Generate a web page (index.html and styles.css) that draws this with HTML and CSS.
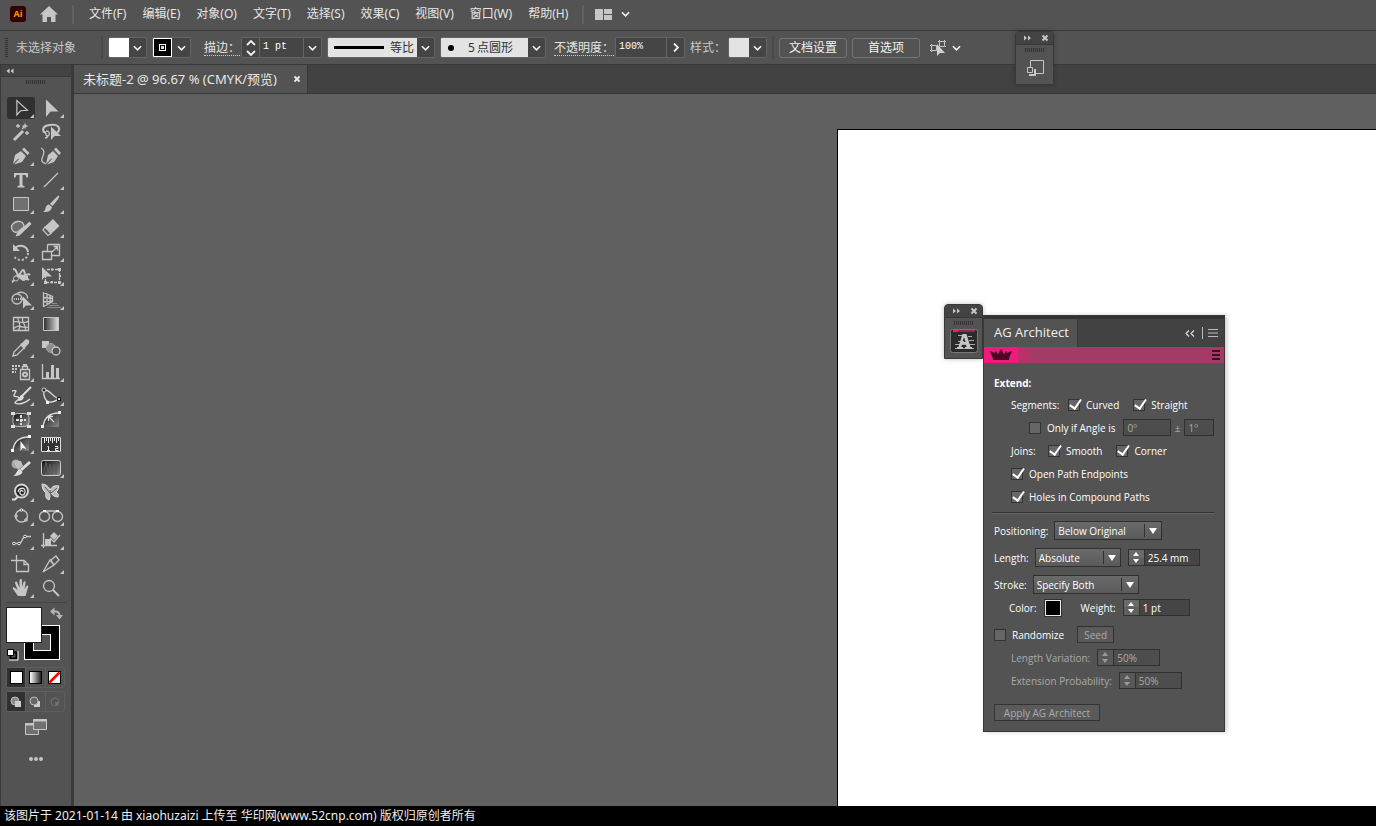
FILE: index.html
```html
<!DOCTYPE html>
<html lang="zh-CN">
<head>
<meta charset="utf-8">
<title>未标题-2 @ 96.67 % (CMYK/预览)</title>
<link rel="stylesheet" href="styles.css">
</head>
<body>
<svg class="defs" aria-hidden="true">
  <defs>
    <linearGradient id="lg" x1="0" x2="1"><stop offset="0" stop-color="#2c2c2c"/><stop offset="1" stop-color="#e0e0e0"/></linearGradient>
    <linearGradient id="wb" x1="0" x2="1"><stop offset="0" stop-color="#fff"/><stop offset="1" stop-color="#222"/></linearGradient>
    <linearGradient id="dk" x1="0" x2="1" y2="1"><stop offset="0" stop-color="#111"/><stop offset="1" stop-color="#8a8a8a"/></linearGradient>
    <symbol id="chev" viewBox="0 0 10 6"><path d="M1 1l4 4 4-4" fill="none" stroke="#f0f0f0" stroke-width="1.8"/></symbol>
    <symbol id="close" viewBox="0 0 8 8"><path d="M1.500 1.500l5 5M6.500 1.500l-5 5" stroke="currentColor" stroke-width="2"/></symbol>
    <symbol id="ff" viewBox="0 0 8 6"><path d="M0 .5L3 3 0 5.500zM4 .5L7 3 4 5.500z" fill="currentColor"/></symbol>
    <symbol id="rw" viewBox="0 0 8 6"><path d="M3.500 .5L.5 3l3 2.500zM7.500 .5L4.500 3l3 2.500z" fill="currentColor"/></symbol>
  </defs>
</svg>

<header class="menubar">
  <svg class="logo" viewBox="0 0 16 16"><rect width="16" height="16" rx="3" fill="#330000"/><text x="8" y="11" text-anchor="middle" class="logo-text">Ai</text></svg>
  <button class="plain" aria-label="主页"><svg width="18" height="16" viewBox="0 0 18 16"><path d="M9 0L0 8.500h2.500V16H7v-5h4v5h4.500V8.500H18z" fill="#c6c6c6"/></svg></button>
  <span class="vline"></span>
  <nav class="menus">
    <button>文件(F)</button><button>编辑(E)</button><button>对象(O)</button><button>文字(T)</button><button>选择(S)</button><button>效果(C)</button><button>视图(V)</button><button>窗口(W)</button><button>帮助(H)</button>
  </nav>
  <span class="vline"></span>
  <button class="plain layout" aria-label="排列文档"><svg width="17" height="11" viewBox="0 0 17 11"><path d="M0 0h8v11H0zM9 0h8v5H9zM9 6h8v5H9z" fill="#c6c6c6"/></svg><svg width="9" height="6"><use href="#chev"/></svg></button>
</header>

<section class="control">
  <span class="grip-v"></span>
  <span class="status">未选择对象</span>
  <span class="vline"></span>
  <button class="combo" aria-label="填色"><span class="sw white"></span><span class="dd"><svg width="9" height="6"><use href="#chev"/></svg></span></button>
  <button class="combo" aria-label="描边颜色"><span class="sw"><svg width="19" height="19" viewBox="0 0 19 19"><path d="M0 0h19v19H0z" fill="#fff"/><path d="M1 1h17v17H1z"/><path d="M6 6h7v7H6z" fill="#fff"/><path d="M7 7h5v5H7z"/><path d="M8 8h3v3H8z" fill="#ddd"/></svg></span><span class="dd"><svg width="9" height="6"><use href="#chev"/></svg></span></button>
  <label class="dotted first" for="weight">描边：</label>
  <span class="combo">
    <button class="spin" aria-label="调整描边粗细"><svg width="10" height="16" viewBox="0 0 10 16"><path d="M1 5l4-4 4 4M1 11l4 4 4-4" fill="none" stroke="#f0f0f0" stroke-width="1.800"/></svg></button>
    <input id="weight" class="num" value="1 pt"><button class="dd" aria-label="描边粗细列表"><svg width="9" height="6"><use href="#chev"/></svg></button>
  </span>
  <button class="combo profile"><span class="light"><i class="bar"></i>等比</span><span class="dd"><svg width="9" height="6"><use href="#chev"/></svg></span></button>
  <button class="combo brush"><span class="light"><i class="dot"></i><b>5</b>点圆形</span><span class="dd"><svg width="9" height="6"><use href="#chev"/></svg></span></button>
  <label class="dotted" for="opacity">不透明度：</label>
  <span class="combo"><input id="opacity" class="num wide" value="100%"><button class="dd" aria-label="不透明度列表"><svg width="6" height="9" viewBox="0 0 6 9"><path d="M1 .5l4 4-4 4" fill="none" stroke="#f0f0f0" stroke-width="1.800"/></svg></button></span>
  <span class="style-label">样式：</span>
  <button class="combo" aria-label="图形样式"><span class="sw pale"></span><span class="dd"><svg width="9" height="6"><use href="#chev"/></svg></span></button>
  <span class="vline"></span>
  <button class="btn">文档设置</button>
  <button class="btn">首选项</button>
  <button class="plain similar" aria-label="选择类似的对象"><svg width="16" height="16" viewBox="0 0 16 16"><g fill="none" stroke="#c6c6c6"><path d="M1.500 5.500h5v5h-5zM9.500 1.500h5v5h-5zM0 5.500h1M1.500 4v1M0 10.500h1M1.500 11v1M14.500 0v1M15 1.500h1M9.500 0v1M8 1.500h1M15 6.500h1"/></g><path d="M7 4v12l3-3h5z" fill="#d0d0d0"/></svg><svg width="9" height="6"><use href="#chev"/></svg></button>
</section>

<main class="work">
  <aside class="tools">
    <div class="tools-head"><svg width="8" height="6"><use href="#rw"/></svg></div>
    <div class="grip-h"></div>
    <div class="grid">
      <button class="tool more on" aria-label="选择工具"><svg viewBox="0 0 28 24"><path d="M9.500 4v15.500l4-4.500 7.500-.5z" class="l"/></svg></button>
      <button class="tool more" aria-label="直接选择工具"><svg viewBox="0 0 28 24"><path d="M9 3.500v17.500l4.500-5.500H21.500z" class="f"/></svg></button>
      <button class="tool" aria-label="魔棒工具"><svg viewBox="0 0 28 24"><path d="M7 20l9-9" class="l w3"/><path d="M11 4v4M9 6h4M18 3.500v5M15.500 6h5M20 11v4M18 13h4M15 9l2-2" class="l"/></svg></button>
      <button class="tool" aria-label="套索工具"><svg viewBox="0 0 28 24"><path d="M9 13c-4-1-4-6 1-7.500s11-1 12 2.500c.5 2-.5 4-2 4.500" class="l w2"/><path d="M9 11c3 0 4 2 3 4s-4 1-3-2M11 15c0 2-1 3-3 3" class="l"/><path d="M14 6.500v13.500l3.500-4h6.500z" class="f"/></svg></button>
      <button class="tool more" aria-label="钢笔工具"><svg viewBox="0 0 28 24"><path d="M6 20l2-9 6-4 5 5-4 6-8 2.500 5-5.500-.6-.6z" class="f"/><path d="M15 5.500l2-2 5.500 5.500-2 2z" class="f"/></svg></button>
      <button class="tool" aria-label="曲率工具"><svg viewBox="0 0 28 24"><path d="M9 20l2-9 5-4 5 5-4 6-7 2.500 5-5.500-.6-.6zM17 5.500l2-2 5 5.500-2 2z" class="f"/><path d="M4 4c4 2 3 5 2 8-2 4-2 6 3 8" class="l"/></svg></button>
      <button class="tool more" aria-label="文字工具"><svg viewBox="0 0 28 24"><path d="M7 5h14v4.500h-1.500l-1-2.500H15.500v10.500l2 .5v1.500h-7V18l2-.5V7H9.500l-1 2.500H7z" class="f"/></svg></button>
      <button class="tool more" aria-label="直线段工具"><svg viewBox="0 0 28 24"><path d="M7 19L21 5" class="l"/></svg></button>
      <button class="tool more" aria-label="矩形工具"><svg viewBox="0 0 28 24"><path d="M6.500 5.500h15v13h-15z" fill="#707070" stroke="#c6c6c6"/></svg></button>
      <button class="tool more" aria-label="画笔工具"><svg viewBox="0 0 28 24"><path d="M21.500 3.500c1.500 1 1 2-6 10.500l-2.500-2c7-7.500 7.500-8 8.500-8.500zM12 12.500l3 2.500c-1 4.500-4.500 5.500-9 5 2-1 2-2 2.500-4s2-3.500 3.500-3.500z" class="f"/></svg></button>
      <button class="tool more" aria-label="Shaper 工具"><svg viewBox="0 0 28 24"><path d="M17 11c.5-4-3-6-6.500-5.500S4 9 4.500 12s3 5 6 4z" fill="#6c6c6c" stroke="#c6c6c6" stroke-width="1.300"/><path d="M22.500 5.500l2 2.500-12 11.500-4 1 1.500-3.500z" class="f"/></svg></button>
      <button class="tool more" aria-label="橡皮擦工具"><svg viewBox="0 0 28 24"><path d="M16 3l6.500 7-8 7.500L8 10.500z" class="f"/><path d="M8 11l6 6.500-3 2-5-5.500z" class="l"/></svg></button>
      <button class="tool more" aria-label="旋转工具"><svg viewBox="0 0 28 24"><path d="M8 8c4-4 12-2.500 13 4" class="l w2"/><path d="M21 13c0 7-10 10-14 3" class="l w2" stroke-dasharray="2 2"/><path d="M6 4v7h7z" class="f"/></svg></button>
      <button class="tool more" aria-label="比例缩放工具"><svg viewBox="0 0 28 24"><path d="M10.500 4.500h12v11h-8M5.500 11.500H14.500V19.500H5.500zM10.500 4.500v7M15 12l5-5M16.500 6.500H20.500V10.500" class="l"/></svg></button>
      <button class="tool more" aria-label="宽度工具"><svg viewBox="0 0 28 24"><path d="M6 5c4 0 3 4 5 6 3 0 3-5 5-5s1 5 3 5 2-2 4 0M5 18c3-1 2-6 5-6s5 5 7 4 2-3 5 0" class="l w2"/><path d="M11 11c3-1 7 0 10 1v4c-4 1-6-2-10-3z" class="f"/><circle cx="9" cy="14.500" r="2.500" fill="#535353" stroke="#c6c6c6"/></svg></button>
      <button class="tool more" aria-label="自由变换工具"><svg viewBox="0 0 28 24"><path d="M10 5.500h12.500v13H8.500V11" class="l" stroke-dasharray="3 1"/><path d="M21 4h3v3h-3zM21 17h3v3h-3zM7 17h3v3H7zM14 4.500h2v2h-2zM14 17h2v2h-2zM22 11h2v2h-2zM5 3v13l3-3.500h7z" class="f"/></svg></button>
      <button class="tool more" aria-label="形状生成器工具"><svg viewBox="0 0 28 24"><circle cx="10" cy="11" r="5" class="l"/><path d="M10 5.500c5-3 11 0 10.500 5" class="l"/><path d="M7 11h9" class="l w2" stroke-dasharray="1 1"/><path d="M16 8.500v12l3-3h6z" class="f"/></svg></button>
      <button class="tool more" aria-label="透视网格工具"><svg viewBox="0 0 28 24"><path d="M6.500 4v15M6.500 4.500l9 4v5l-9 5M10 6v11M13 7.500v8M6.500 9.500l9 1M6.500 14l9-1" class="l"/><path d="M15 15.500h5M12 17.500h10M10 19.500h14" stroke="#8c8c8c"/></svg></button>
      <button class="tool" aria-label="网格工具"><svg viewBox="0 0 28 24"><path d="M6.500 5.500h15v13h-15zM6.500 10c5-2 10 3 15-1M6.500 17c4-6 10 0 15-2M11 5.500c-1 4 5 8 0 13M16 5.500c-3 4 5 9 2 13" class="l"/></svg></button>
      <button class="tool" aria-label="渐变工具"><svg viewBox="0 0 28 24"><path d="M6.500 5.500h15v13h-15z" fill="url(#lg)" stroke="#c6c6c6"/></svg></button>
      <button class="tool more" aria-label="吸管工具"><svg viewBox="0 0 28 24"><path d="M6 20l1-4 7-7 3 3-7 7z" class="l"/><path d="M13 8l2-1 3-3c2-2 6 1 3.500 4l-3 3-.5 2.500z" class="f"/></svg></button>
      <button class="tool" aria-label="混合工具"><svg viewBox="0 0 28 24"><path d="M5 5h7v7H5z" class="f"/><circle cx="14" cy="12" r="4.500" fill="#8d8d8d" stroke="#a5a5a5"/><circle cx="19" cy="15" r="4" fill="#535353" stroke="#c6c6c6" stroke-width="1.300"/></svg></button>
      <button class="tool more" aria-label="符号喷枪工具"><svg viewBox="0 0 28 24"><path d="M13.500 9.500h9V19.500h-9zM15.500 9V6.500h5V9" class="l"/><path d="M16 4h4v2h-4z" class="f"/><circle cx="18" cy="14.500" r="2" class="l w2"/><path d="M5 6h8M5 9h6M5 12h4" class="l w2" stroke-dasharray="2 1"/></svg></button>
      <button class="tool more" aria-label="柱形图工具"><svg viewBox="0 0 28 24"><path d="M5.500 4v14.500H23" class="l"/><path d="M9 12h3v7H9zM14 5h3v14h-3zM19 8h3v11h-3z" class="f"/></svg></button>
      <button class="tool more" aria-label="动态草绘工具"><svg viewBox="0 0 28 24"><path d="M5 7c2 0 4-1 4 0s-3 4-2 5 5 0 5 2-5 4-4 5c4 2 11 0 15-4" class="l hi"/><path d="M24 3L14 13" class="l w2 hi"/><path d="M14 11l3 2c-1 3-3 4-6 4 1-2 1-4 3-6z" fill="#ddd"/></svg></button>
      <button class="tool more" aria-label="贝塞尔工具"><svg viewBox="0 0 28 24"><path d="M7 6c-1 5 1 11 5 12s8-2 10-3M7 6c8 0 6 6 15 9" class="l hi"/><circle cx="7" cy="6" r="2" fill="#222" stroke="#ddd"/><path d="M20.500 13.500h3v3h-3z" stroke="#111" fill="#ddd"/><path d="M9 17h3v3H9z" fill="#eee"/></svg></button>
      <button class="tool" aria-label="路径编辑工具"><svg viewBox="0 0 28 24"><rect x="6" y="5.500" width="16" height="13" rx="4" fill="url(#dk)" stroke="#bbb"/><path d="M4 4h4v3H4zM20 4h4v3h-4zM4 17h4v3H4zM20 17h4v3h-4z" fill="#ddd"/><path d="M14 7v10M9 12h10" class="l w2 hi" stroke-dasharray="3 1"/></svg></button>
      <button class="tool" aria-label="圆角工具"><svg viewBox="0 0 28 24"><path d="M6 19C7 10 12 5 22 5v14z" fill="url(#dk)"/><path d="M6 19C7 10 12 5 22 5M11 8l6 6M12 8.500h4M11.500 9v4" class="l hi"/><path d="M4 17h3v3H4zM21 3h3v3h-3z" fill="#eee"/></svg></button>
      <button class="tool more" aria-label="智能移除工具"><svg viewBox="0 0 28 24"><path d="M6 18C7 10 12 5 22 5v14z" fill="url(#dk)"/><path d="M6 18C7 10 12 5 22 5" class="l hi"/><path d="M4 17h3v3H4zM21 3h3v3h-3zM13.500 9v10l2-3 4 1z" fill="#fff"/></svg></button>
      <button class="tool" aria-label="测量工具"><svg viewBox="0 0 28 24"><path d="M4.500 5.500h19v14h-19z" fill="#333" stroke="#ddd"/><path d="M7.500 6v5M9.500 6v3M11.500 6v5M13.500 6v3M15.500 6v5M17.500 6v3M19.500 6v5M21.500 6v3" stroke="#eee"/><path d="M10.500 14.500h1v4M10 18.500h3M18 14.500h3v2h-2.500v2h3" fill="none" stroke="#eee"/></svg></button>
      <button class="tool" aria-label="样式画笔工具"><svg viewBox="0 0 28 24"><circle cx="9" cy="8" r="4.500" fill="#a8a8a8"/><path d="M6 5h8l2 5-5 4z" fill="#bdbdbd"/><path d="M23 6L14 14" class="l w3 hi"/><path d="M13 13l2.500 3c-1 3-5 4-9 4 3-2 3-6 6.500-7z" fill="#ddd"/></svg></button>
      <button class="tool more" aria-label="纹理工具"><svg viewBox="0 0 28 24"><rect x="4.500" y="4.500" width="19" height="15" rx="2" fill="url(#dk)" stroke="#ccc"/><path d="M7 15l2-9 2 11 2-9 2 10 2-10 2 10 2-10" stroke="#5d5d5d" fill="none"/></svg></button>
      <button class="tool more" aria-label="魔镜工具"><svg viewBox="0 0 28 24"><circle cx="14.500" cy="11" r="6.500" fill="#222" stroke="#d5d5d5" stroke-width="2"/><path d="M11 12c1-5 8-5 7 0s-6 3-5 0 3-1 3 0" class="l hi"/><path d="M5 19.500h3l3-3" class="l w2 hi"/></svg></button>
      <button class="tool" aria-label="蝴蝶工具"><svg viewBox="0 0 28 24"><path d="M5 4c4 0 7 3 8 6 2-4 6-5 9-4-1 3-1 5-3 6 2 1 3 3 2 5-3 0-5-1-7-4l-2 7c-3-1-4-4-3-7-3-2-4-6-4-9z" fill="#bdbdbd" stroke="#ddd"/><path d="M8 7l5 6M13 10l1 6M20 8l-6 5" stroke="#5a5a5a" fill="none"/></svg></button>
      <button class="tool more" aria-label="动态椭圆工具"><svg viewBox="0 0 28 24"><circle cx="14.500" cy="12" r="6" class="l"/><g fill="#535353" stroke="#eee"><circle cx="14.500" cy="6" r="1.200"/><circle cx="9" cy="12" r="1.200"/><circle cx="19" cy="16" r="1.200"/></g></svg></button>
      <button class="tool more" aria-label="相切圆工具"><svg viewBox="0 0 28 24"><circle cx="7.500" cy="12.500" r="5" class="l"/><circle cx="20.500" cy="12.500" r="5" class="l"/><path d="M8 7h12" class="l hi"/><path d="M6 6h3v2H6zM19 6h3v2h-3z" fill="#eee"/></svg></button>
      <button class="tool more" aria-label="延伸路径工具"><svg viewBox="0 0 28 24"><path d="M5 15.500h7c4 0 2-7 7-7h5" class="l"/><g fill="#222" stroke="#eee"><circle cx="7" cy="15.500" r="1.300"/><circle cx="12" cy="15.500" r="1.300"/><circle cx="18" cy="8.500" r="1.300"/></g></svg></button>
      <button class="tool more" aria-label="对齐路径工具"><svg viewBox="0 0 28 24"><path d="M6.500 5v15M4 17.500h16M23 7l-6 7-4-4" class="l"/><path d="M8 11h6v6H8zM17 4l4 4-4 4-4-4z" class="f"/></svg></button>
      <button class="tool" aria-label="画板工具"><svg viewBox="0 0 28 24"><path d="M9.500 3v6M4 8.500h5M9.500 8.500h7.500l4.500 4v7H9.500zM17 8.500v4h4" class="l"/></svg></button>
      <button class="tool more" aria-label="切片工具"><svg viewBox="0 0 28 24"><path d="M6 20l7-12 4 5zM14 8l5-4 3 4-5 5z" class="l"/></svg></button>
      <button class="tool more" aria-label="抓手工具"><svg viewBox="0 0 28 24"><path d="M11 20l-5-7c-1-2 1-2.500 2-1l2.500 2-2.500-7c0-2 2-2 2.500 0l2 5V4.500c0-2 2.500-2 2.500 0V11l1.500-5c.5-1.500 2.500-1 2 1l-1 6 2-3c1-1 2.500 0 1.500 1.500L18.500 20z" class="f"/></svg></button>
      <button class="tool" aria-label="缩放工具"><svg viewBox="0 0 28 24"><circle cx="12" cy="10" r="5.500" class="l"/><path d="M16 14l6 6" class="l w2"/></svg></button>
    </div>
    <hr>
    <svg class="swatches" width="60" height="54" viewBox="0 0 60 54">
      <path d="M18 18h36v35H18z" fill="#fff"/><path d="M19 19h34v33H19z"/><path d="M27 27h18v17H27z" fill="#fff"/><path d="M28 28h16v15H28z" fill="#535353"/>
      <path d="M0 0h36v36H0z" fill="#222"/><path d="M1 1h34v34H1z" fill="#fff"/>
      <path d="M48 4.500c4-.5 5.500 1.500 5.500 4" fill="none" stroke="#b5b5b5" stroke-width="2"/><path d="M44 4.500l4.500-4v8zM50 8h7l-3.500 4.500z" fill="#b5b5b5"/>
      <path d="M4.500 45.500h6v6h-6z" stroke="#000" stroke-width="2" fill="none"/><path d="M1.500 42.500h6v6h-6z" fill="#fff" stroke="#000"/><path d="M3 53h9v-9" fill="none" stroke="#fff"/>
    </svg>
    <div class="modes">
      <button class="on" aria-label="颜色"><svg width="13" height="13"><path d="M0 0h13v13H0z"/><path d="M1 1h11v11H1z" fill="#fff"/></svg></button>
      <button aria-label="渐变"><svg width="13" height="13"><path d="M0 0h13v13H0z"/><path d="M1 1h11v11H1z" fill="url(#wb)"/></svg></button>
      <button aria-label="无"><svg width="13" height="13"><path d="M0 0h13v13H0z"/><path d="M1 1h11v11H1z" fill="#fff"/><path d="M1.500 11.500l10-10" stroke="#f00" stroke-width="2.500"/></svg></button>
    </div>
    <div class="modes">
      <button class="on" aria-label="正常绘图"><svg width="12" height="12"><circle cx="5" cy="5" r="4" fill="#888" stroke="#bbb"/><path d="M5 5h6v6H5z" fill="#ccc"/></svg></button>
      <button aria-label="背面绘图"><svg width="12" height="12"><path d="M5 5h6v6H5z" fill="#ccc"/><circle cx="5" cy="5" r="4" fill="#666" stroke="#bbb"/></svg></button>
      <button aria-label="内部绘图"><svg width="12" height="12"><circle cx="6" cy="6" r="4" fill="none" stroke="#707070"/><path d="M6 6h3v3H6z" fill="#707070"/></svg></button>
    </div>
    <button class="plain screen" aria-label="更改屏幕模式"><svg width="22" height="16" viewBox="0 0 22 16"><path d="M.5 4.500h13v11H.5z" fill="#707070" stroke="#c6c6c6"/><path d="M8.500.5h13v10h-13z" fill="#707070" stroke="#c6c6c6"/><path d="M0 5.500h8M8 1.500h14" stroke="#c6c6c6" stroke-width="2"/></svg></button>
    <button class="plain dots" aria-label="编辑工具栏"><svg width="14" height="4"><g fill="#c6c6c6"><circle cx="2" cy="2" r="2"/><circle cx="7" cy="2" r="2"/><circle cx="12" cy="2" r="2"/></g></svg></button>
  </aside>

  <section class="document">
    <div class="tabs"><div class="tab"><span>未标题-2 @ 96.67 % (CMYK/预览)</span><button class="plain" aria-label="关闭"><svg width="8" height="8"><use href="#close"/></svg></button></div></div>
    <div class="canvas">
      <div class="artboard"></div>
      <div class="dock ag-dock">
        <div class="dock-head"><svg width="8" height="6"><use href="#ff"/></svg><svg width="8" height="8"><use href="#close"/></svg></div>
        <div class="grip-h"></div>
        <button class="dock-icon" aria-label="AG Architect 面板"><svg width="28" height="24" viewBox="0 0 28 24"><rect x=".5" y=".5" width="27" height="23" rx="2" fill="#2b2b2b" stroke="#777"/><path d="M3 1h5v2H3z" fill="#f01a7c"/><path d="M8 1h17v2H8z" fill="#8e2a5a"/><path d="M8 6.500h5M8 12.500h6M5 15.500h20M5 19.500h19M19 11.500h5M18 7.500h4" stroke="#aaa"/><path d="M12.500 5h4l4 13h1.500v2h-7v-2h1.500l-.5-3h-4l-.7 3h1.700v2H7v-2h1.500zM14 8l-1.500 5h3z" fill="#c6c6c6" fill-rule="evenodd"/></svg></button>
      </div>
      <section class="panel">
        <div class="panel-tabs"><h2>AG Architect</h2><svg width="10" height="7" viewBox="0 0 10 7"><path d="M4 .5l-3 3 3 3M9 .5l-3 3 3 3" fill="none" stroke="#ddd" stroke-width="1.200"/></svg><i></i><svg width="10" height="8"><path d="M0 .5h10M0 4h10M0 7.500h10" stroke="#bbb"/></svg></div>
        <div class="banner">
          <svg width="48" height="16" viewBox="0 0 48 16"><path d="M0 0h34v16H0z" fill="#f01a7c"/><path d="M34 1h3v2h-3zM38 0h2v2h-2zM35 4h2v3h-2zM38 4h3v2h-3zM42 2h2v2h-2zM34 8h3v2h-3zM39 8h2v2h-2zM42 7h3v2h-3zM36 11h3v2h-3zM41 11h2v2h-2zM34 13h2v3h-2zM39 14h2v2h-2zM43 13h2v2h-2z" fill="#d8226f"/><path d="M6 4l5 2 1-2 2 3.500 1-2L17 2l2 3.500 1 2L22 4l1 2 5-2c-1 4-3 5-3 9H9c0-4-2-5-3-9z" fill="#4a0a26"/></svg>
          <svg width="8" height="10"><path d="M0 1h8M0 5h8M0 9h8" stroke="#3b1023" stroke-width="2"/></svg>
        </div>
        <form class="form">
          <strong>Extend:</strong>
          <div class="row in"><span class="seg">Segments:</span><label class="check"><input type="checkbox" checked>Curved</label><label class="check"><input type="checkbox" checked>Straight</label></div>
          <div class="row deep"><label class="check"><input type="checkbox">Only if Angle is</label><input class="field angle" aria-label="Angle" value="0º" disabled><span class="dim">±</span><input class="field tol" aria-label="Tolerance" value="1º" disabled></div>
          <div class="row in"><span class="joins">Joins:</span><label class="check"><input type="checkbox" checked>Smooth</label><label class="check"><input type="checkbox" checked>Corner</label></div>
          <div class="row in"><label class="check"><input type="checkbox" checked>Open Path Endpoints</label></div>
          <div class="row in"><label class="check"><input type="checkbox" checked>Holes in Compound Paths</label></div>
          <hr>
          <div class="row tall"><label for="pos">Positioning:</label><span class="select w108"><select id="pos"><option>Below Original</option></select></span></div>
          <div class="row tall"><label for="len">Length:</label><span class="select w86"><select id="len"><option>Absolute</option></select></span><span class="step"><button type="button" aria-label="Adjust length"></button><input class="field" aria-label="Length value" value="25.4 mm"></span></div>
          <div class="row tall"><label for="str">Stroke:</label><span class="select w106"><select id="str"><option>Specify Both</option></select></span></div>
          <div class="row short"><span>Color:</span><button type="button" class="color" aria-label="Color"></button><label for="wt" class="weight">Weight:</label><span class="step mid"><button type="button" aria-label="Adjust weight"></button><input id="wt" class="field" value="1 pt"></span></div>
          <div class="row random"><label class="check"><input type="checkbox">Randomize</label><button type="button" class="push" disabled>Seed</button></div>
          <div class="row in dim"><label for="lv">Length Variation:</label><span class="step off small"><button type="button" disabled aria-label="Adjust variation"></button><input id="lv" class="field" value="50%" disabled></span></div>
          <div class="row in dim"><label for="ep">Extension Probability:</label><span class="step off small"><button type="button" disabled aria-label="Adjust probability"></button><input id="ep" class="field" value="50%" disabled></span></div>
          <button type="button" class="push apply" disabled>Apply AG Architect</button>
        </form>
      </section>
    </div>
  </section>
</main>

<div class="dock top-dock">
  <div class="dock-head"><svg width="8" height="6"><use href="#ff"/></svg><svg width="8" height="8"><use href="#close"/></svg></div>
  <div class="grip-h"></div>
  <button class="dock-icon" aria-label="资源导出"><svg width="18" height="17" viewBox="0 0 18 17"><path d="M3.500 7V.5h13V13.500H9" fill="none" stroke="#c6c6c6"/><path d="M.5 7.500h5v5h-5z" fill="#535353" stroke="#c6c6c6"/><path d="M7 10h1v5H3v-1" fill="none" stroke="#c6c6c6" stroke-width="2"/></svg></button>
</div>

<footer class="caption">该图片于 2021-01-14 由 xiaohuzaizi 上传至 华印网(www.52cnp.com) 版权归原创者所有</footer>
</body>
</html>
```

FILE: styles.css
```css
* { box-sizing: border-box; }
html, body { height: 100%; }
body {
  margin: 0;
  display: flex;
  flex-direction: column;
  overflow: hidden;
  background: #535353;
  color: #e6e6e6;
  font: 12px/16px "Noto Sans", "Noto Sans CJK SC", sans-serif;
}
button, input, select { font: inherit; color: inherit; margin: 0; padding: 0; border: 0; background: none; border-radius: 0; }
svg { display: block; flex: none; }
.defs { position: absolute; width: 0; height: 0; }
.plain { display: flex; align-items: center; justify-content: center; }
.vline { width: 2px; align-self: stretch; margin: 5px 0; background: #494949; flex: none; }

.menubar { flex: none; height: 31px; display: flex; align-items: center; padding: 0 10px 2px; border-bottom: 1px solid #383838; }
.logo { width: 16px; height: 16px; }
.logo-text { font: bold 9px "Open Sans", sans-serif; fill: #ff9a00; }
.menubar > .plain { margin-left: 14px; }
.menubar .vline { margin: 5px 0 4px 14px; background: #616161; }
.menus { display: flex; gap: 16px; margin-left: 15px; white-space: nowrap; }
.menubar .layout { gap: 9px; margin-left: 11px; }

.control { flex: none; height: 34px; display: flex; align-items: center; gap: 5px; padding: 0 5px; border-bottom: 1px solid #383838; white-space: nowrap; }
.grip-v { width: 3px; height: 20px; background: repeating-linear-gradient(#333 0 1px, transparent 1px 2px); }
.status { width: 80px; margin-left: 3px; color: #c8c8c8; }
.combo { display: flex; align-items: stretch; height: 21px; border: 1px solid #646464; border-radius: 2px; background: #454545; overflow: hidden; }
.sw { width: 20px; }
.white { background: #fff; }
.pale { background: #e3e3e3; }
.dd { width: 17px; display: flex; align-items: center; justify-content: center; }
.num + .dd { width: 18px; border-left: 1px solid #646464; }
.dotted { border-bottom: 1px dotted #ccc; line-height: 15px; margin-right: -4px; }
.first { margin-left: 8px; }
.spin { width: 18px; display: flex; align-items: center; justify-content: center; border-right: 1px solid #646464; }
.num { width: 43px; padding: 0 3px 2px; color: #fff; font: 10px/16px "Liberation Mono", monospace; }
.wide { width: 50px; }
.light { display: flex; align-items: center; flex: 1; background: #e3e3e3; color: #333; }
.profile { width: 108px; }
.brush { width: 106px; margin-right: 3px; }
.bar { width: 50px; height: 3px; margin: 0 6px; background: #000; }
.dot { width: 6px; height: 6px; margin: 0 12px 0 7px; border-radius: 50%; background: #000; }
.brush b { font-weight: 400; width: 11px; }
.style-label { color: #c8c8c8; margin-right: -3px; }
.btn { width: 68px; height: 20px; border: 1px solid #757575; border-radius: 3px; color: #f2f2f2; line-height: 18px; }
.similar { gap: 6px; margin-left: 5px; }

.work { flex: 1; min-height: 0; display: flex; }
.tools { width: 74px; flex: none; display: flex; flex-direction: column; border-left: 1px solid #3a3a3a; border-right: 3px solid #3a3a3a; padding: 0 5px; }
.tools-head { height: 12px; margin: 0 -5px; padding: 3px 5px; background: #434343; border-bottom: 1px solid #383838; color: #ccc; }
.grip-h { width: 20px; height: 4px; margin: 3px auto 0; background: repeating-linear-gradient(90deg, #333 0 1px, transparent 1px 2px); }
.grid { display: grid; grid-template-columns: repeat(2, 30px); grid-auto-rows: 24px; margin-top: 12px; }
.tool { position: relative; display: flex; justify-content: center; }
.tool svg { width: 28px; height: 24px; }
.tool.on svg { background: #303030; border-radius: 3px; height: 22px; margin-top: 1px; }
.more::after { content: ""; position: absolute; right: 2px; bottom: 2px; border: 2px solid; border-color: transparent #c6c6c6 #c6c6c6 transparent; }
.f { fill: #c6c6c6; }
.l { fill: none; stroke: #c6c6c6; stroke-width: 1.3; }
.w2 { stroke-width: 2; }
.w3 { stroke-width: 3; }
.hi { stroke: #ddd; }
.tools hr { width: 60px; margin: 2px 0 4px; border: 0; border-top: 1px solid #444; }
.modes { display: flex; width: 59px; height: 21px; margin-top: 6px; border: 1px solid #5f5f5f; border-radius: 3px; }
.modes + .modes { margin-top: 3px; }
.modes button { flex: 1; display: flex; align-items: center; justify-content: center; border-right: 1px solid #5f5f5f; }
.modes button:last-child { border: 0; }
.modes .on { background: #303030; }
.screen { margin: 7px auto 0; }
.dots { margin-top: 22px; }

.document { flex: 1; min-width: 0; display: flex; flex-direction: column; }
.tabs { flex: none; height: 29px; display: flex; background: #424242; border-bottom: 1px solid #383838; }
.tab { display: flex; align-items: center; gap: 16px; padding: 0 6px 0 9px; background: #535353; border-right: 1px solid #383838; font-size: 13px; }
.canvas { position: relative; flex: 1; overflow: hidden; background: #606060; }
.artboard { position: absolute; left: 763px; top: 35px; right: 0; bottom: 0; background: #fff; border: solid #000; border-width: 1px 0 0 1px; }

.dock { position: absolute; width: 39px; background: #535353; border: 1px solid #383838; border-radius: 4px 4px 0 0; box-shadow: 0 0 5px rgba(0, 0, 0, .25); }
.top-dock { left: 1015px; top: 31px; height: 54px; }
.ag-dock { left: 870px; top: 210px; height: 55px; }
.dock-head { display: flex; justify-content: space-between; align-items: center; height: 13px; padding: 0 4px 0 8px; background: #434343; border-bottom: 1px solid #383838; color: #c6c6c6; border-radius: 4px 4px 0 0; }
.dock-icon { display: block; margin: 4px 0 0 5px; }
.top-dock .dock-icon { margin: 8px 0 0 11px; }

.panel { position: absolute; left: 909px; top: 221px; width: 242px; background: #535353; border: 1px solid #383838; box-shadow: 2px 0 4px rgba(0, 0, 0, .2); color: #fff; font-family: "Open Sans", sans-serif; font-size: 10px; }
.panel-tabs { display: flex; align-items: center; gap: 7px; height: 31px; padding-right: 6px; background: #424242; border-top: 3px solid #333; }
.panel-tabs h2 { align-self: stretch; margin: 0 auto 0 0; padding: 0 8px 0 10px; background: #535353; border-right: 1px solid #383838; font-weight: 400; font-size: 13px; line-height: 26px; color: #f0f0f0; }
.panel-tabs i { width: 1px; height: 12px; background: #bbb; }
.panel-tabs svg:last-child { margin-left: -2px; }
.banner { display: flex; justify-content: space-between; align-items: center; height: 16px; padding-right: 4px; background: #a33b66; }
.form { display: flex; flex-direction: column; padding: 11px 10px 10px; line-height: 14px; }
.form strong { line-height: 19px; }
.row { display: flex; align-items: center; height: 23px; white-space: nowrap; }
.tall { height: 27px; }
.in { padding-left: 17px; }
.deep { padding-left: 35px; }
.short { height: 19px; padding-left: 15px; }
.random { margin-top: 6px; }
.seg { width: 57px; }
.joins { width: 37px; }
.check { display: flex; align-items: center; gap: 6px; }
.check + .check { margin-left: 14px; }
.check input { appearance: none; position: relative; width: 12px; height: 12px; flex: none; border: 1px solid #333; background: #666; }
.check input:checked::after { content: ""; position: absolute; left: 3px; top: -3px; width: 5px; height: 10px; border: solid #fff; border-width: 0 2px 2px 0; transform: rotate(35deg); }
.field { height: 17px; padding: 0 3px; border: 1px solid #303030; background: #454545; min-width: 0; }
.field:disabled { background: #4d4d4d; color: #aaa; }
.angle { width: 48px; margin-left: 8px; }
.tol { width: 30px; margin-left: 4px; }
.dim { color: #aaa; }
.angle + .dim { margin-left: 4px; }
.form hr { margin: 4px 0 3px -2px; width: 223px; border: 0; border-top: 1px solid #353535; border-bottom: 1px solid #666; }
.select { position: relative; margin-left: 6px; height: 19px; }
.select select { appearance: none; width: 100%; height: 19px; padding: 0 3px; border: 1px solid #303030; background: linear-gradient(#6a6a6a, #5a5a5a); }
.select::before { content: ""; position: absolute; right: 17px; top: 3px; width: 1px; height: 13px; background: #303030; }
.select::after { content: ""; position: absolute; right: 5px; top: 7px; border: 4px solid transparent; border-top: 6px solid #fff; border-bottom: 0; }
.w108 { width: 108px; }
.w106 { width: 106px; }
.w86 { width: 86px; }
.step { display: flex; width: 72px; height: 17px; margin-left: 7px; }
.step button { position: relative; width: 16px; flex: none; border: 1px solid #303030; border-right: 0; background: linear-gradient(#6a6a6a 50%, #606060 50%); }
.step button::before, .step button::after { content: ""; position: absolute; left: 4px; border: 3px solid transparent; }
.step button::before { top: 2px; border-bottom: 4px solid #fff; border-top: 0; }
.step button::after { bottom: 2px; border-top: 4px solid #fff; border-bottom: 0; }
.step .field { flex: 1; width: 0; }
.mid { width: 67px; }
.small { width: 63px; }
.off button { background: #585858; }
.off button::before { border-bottom-color: #999; }
.off button::after { border-top-color: #999; }
.color { width: 18px; height: 18px; margin: 0 19px 0 7px; border: 1px solid #303030; background: #000; box-shadow: inset 0 0 0 1px #eee; }
.push { height: 17px; width: 37px; margin-left: 13px; border: 1px solid #333; background: #5a5a5a; color: #aaa; line-height: 14px; }
.apply { width: 106px; margin: 12px 0 0; }

.caption { flex: none; height: 20px; padding: 0 4px; background: #000; color: #eee; line-height: 19px; white-space: nowrap; }
```
